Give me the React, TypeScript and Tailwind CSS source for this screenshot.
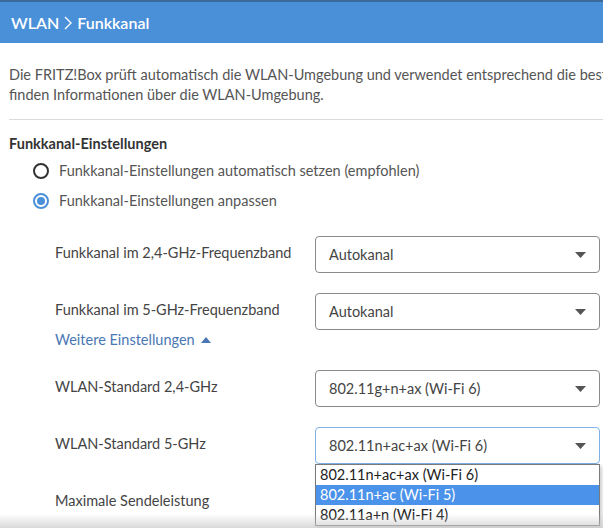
import React from "react";

const Caret = () => (
  <svg width="11" height="6" viewBox="0 0 11 6" className="shrink-0">
    <path d="M0 0 L11 0 L5.5 6 Z" fill="#555" />
  </svg>
);

function Select({ value, focused }: { value: string; focused?: boolean }) {
  return (
    <div
      className={
        focused
          ? "h-[37px] w-[285px] rounded-[4px] border border-[#7fb0e6] flex items-center justify-between pl-[13px] pr-[13px] text-[#444] bg-white"
          : "h-[37px] w-[285px] rounded-[4px] border border-[#8a8a8a] flex items-center justify-between pl-[13px] pr-[13px] text-[#444] bg-white"
      }
    >
      <span>{value}</span>
      <Caret />
    </div>
  );
}

function Row({ label, children }: { label: string; children?: React.ReactNode }) {
  return (
    <div className="flex items-center h-[37px]">
      <div className="w-[260px] shrink-0 text-[#444] -mt-[3px]">{label}</div>
      {children}
    </div>
  );
}

export default function App() {
  return (
    <div
      className="relative w-[603px] h-[528px] overflow-hidden bg-white text-[14.5px] leading-[20px]"
      style={{ fontFamily: "Lato, 'Noto Sans', sans-serif" }}
    >
      <div className="h-[2px] bg-[#3b6a99]" />
      <div className="h-[41px] bg-[#4a90d9] flex items-center pl-[11px] text-white text-[16px] font-semibold gap-[5px]">
        <span>WLAN</span>
        <svg width="8" height="14" viewBox="0 0 8 14">
          <path d="M1 1 L7 7 L1 13" fill="none" stroke="white" strokeWidth="1.4" />
        </svg>
        <span>Funkkanal</span>
      </div>

      <div className="pl-[9px] pt-[22px] text-[#555] whitespace-nowrap overflow-hidden">
        <div>Die FRITZ!Box prüft automatisch die WLAN-Umgebung und verwendet entsprechend die besten</div>
        <div>finden Informationen über die WLAN-Umgebung.</div>
      </div>

      <div className="ml-[9px] mt-[14px] h-px bg-[#dcdcdc]" />

      <div className="pl-[9px] pt-[14px] font-bold text-[#333]">Funkkanal-Einstellungen</div>

      <div className="pl-[33px] pt-[7px] flex flex-col gap-[10px] text-[#555]">
        <div className="flex items-center gap-[10px]">
          <span className="w-[16px] h-[16px] rounded-full border-[2px] border-[#333] bg-white" />
          <span>Funkkanal-Einstellungen automatisch setzen (empfohlen)</span>
        </div>
        <div className="flex items-center gap-[10px]">
          <span className="w-[16px] h-[16px] rounded-full border-[2px] border-[#4a90d9] flex items-center justify-center">
            <span className="w-[8px] h-[8px] rounded-full bg-[#4a90d9]" />
          </span>
          <span>Funkkanal-Einstellungen anpassen</span>
        </div>
      </div>

      <div className="pl-[55px] pt-[25px] flex flex-col">
        <Row label="Funkkanal im 2,4-GHz-Frequenzband">
          <Select value="Autokanal" />
        </Row>
        <div className="h-[20px]" />
        <Row label="Funkkanal im 5-GHz-Frequenzband">
          <Select value="Autokanal" />
        </Row>
        <div className="h-[40px] flex items-start text-[#4a77b4] gap-[6px]">
          <span>Weitere Einstellungen</span>
          <svg width="10" height="6" viewBox="0 0 10 6" className="mt-[7px]">
            <path d="M0 6 L10 6 L5 0 Z" fill="#4a77b4" />
          </svg>
        </div>
        <Row label="WLAN-Standard 2,4-GHz">
          <Select value="802.11g+n+ax (Wi-Fi 6)" />
        </Row>
        <div className="h-[20px]" />
        <Row label="WLAN-Standard 5-GHz">
          <div className="relative">
            <Select value="802.11n+ac+ax (Wi-Fi 6)" focused />
            <div className="absolute left-0 top-[37px] w-[285px] z-10 bg-white border border-[#7a7a7a] shadow-[2px_2px_4px_rgba(0,0,0,0.2)] text-[#222]">
              <div className="h-[20px] pl-[4px] flex items-center">802.11n+ac+ax (Wi-Fi 6)</div>
              <div className="h-[20px] pl-[4px] flex items-center bg-[#4b92ea] text-white">802.11n+ac (Wi-Fi 5)</div>
              <div className="h-[20px] pl-[4px] flex items-center">802.11a+n (Wi-Fi 4)</div>
            </div>
          </div>
        </Row>
        <div className="h-[20px]" />
        <Row label="Maximale Sendeleistung" />
      </div>

      <div className="pointer-events-none absolute left-0 right-0 bottom-0 h-[14px] z-20 bg-gradient-to-b from-[rgba(255,255,255,0)] to-[rgba(200,200,200,0.7)]" />
    </div>
  );
}
